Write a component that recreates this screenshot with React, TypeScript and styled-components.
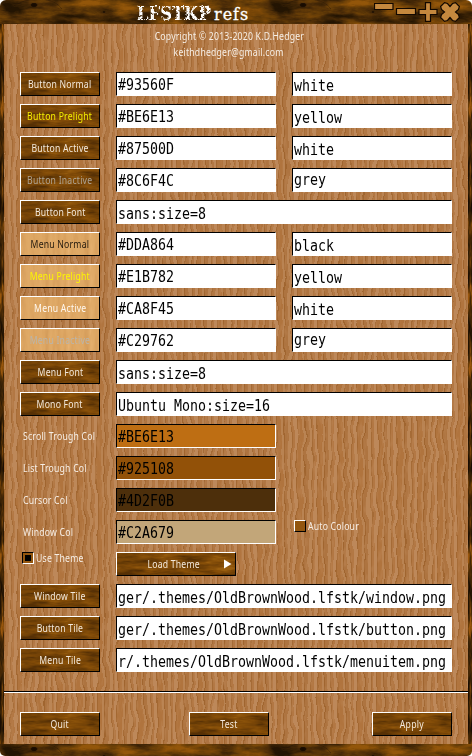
import React from 'react';
import styled, { createGlobalStyle, css } from 'styled-components';

type Texture = { w: number; h: number; freq: string; seed: number; r: string; g: string; b: string; octaves?: number; contrast?: number; extra?: string };

const svgUrl = (svg: string) => `url("data:image/svg+xml,${encodeURIComponent(svg)}")`;

/* Procedural wood: one noise channel is stretched, then mapped on a colour ramp. */
const wood = ({ w, h, freq, seed, r, g, b, octaves = 3, contrast = 2.4, extra = '' }: Texture) => {
  const k = contrast;
  const o = 0.5 - k / 2;
  const row = `${k} 0 0 0 ${o}`;
  return svgUrl(`<svg xmlns="http://www.w3.org/2000/svg" width="${w}" height="${h}"><filter id="f" x="0" y="0" width="100%" height="100%" color-interpolation-filters="sRGB"><feTurbulence type="fractalNoise" baseFrequency="${freq}" numOctaves="${octaves}" seed="${seed}" stitchTiles="stitch"/><feColorMatrix values="${row} ${row} ${row} 0 0 0 0 1"/><feComponentTransfer><feFuncR type="table" tableValues="${r}"/><feFuncG type="table" tableValues="${g}"/><feFuncB type="table" tableValues="${b}"/></feComponentTransfer></filter><rect width="${w}" height="${h}" filter="url(#f)"/>${extra}</svg>`);
};

/* Panel grain: hard-edged vertical strands, bent slightly by noise. */
const grain = () => {
  const stops = [
    [0, 1, '#a0652f'], [1, 3, '#ae7440'], [4, 3, '#bb8656'], [7, 1, '#a56b36'],
    [8, 2, '#b27743'], [10, 3, '#bd885a'], [13, 1, '#a36832'], [14, 4, '#b0743e'], [18, 2, '#b98352'],
  ] as const;
  const stripes = stops.map(([x, w, c]) => `<rect x="${x}" width="${w}" height="20" fill="${c}"/>`).join('');
  return svgUrl(`<svg xmlns="http://www.w3.org/2000/svg" width="464" height="720"><defs><pattern id="p" width="20" height="20" patternUnits="userSpaceOnUse">${stripes}</pattern><filter id="f" filterUnits="userSpaceOnUse" x="-20" y="-20" width="504" height="760" color-interpolation-filters="sRGB"><feTurbulence type="fractalNoise" baseFrequency=".06 .045" numOctaves="2" seed="7" result="n"/><feDisplacementMap in="SourceGraphic" in2="n" scale="8" xChannelSelector="R" yChannelSelector="A" result="d"/><feTurbulence type="fractalNoise" baseFrequency=".3 .08" numOctaves="2" seed="2"/><feColorMatrix values="0 0 0 0 .74 0 0 0 0 .53 0 0 0 0 .34 4 0 0 0 -1.9" result="s"/><feComponentTransfer in="s" result="t"><feFuncA type="linear" slope=".45"/></feComponentTransfer><feMerge><feMergeNode in="d"/><feMergeNode in="t"/></feMerge></filter></defs><rect x="-20" y="-20" width="504" height="760" fill="url(#p)" filter="url(#f)"/></svg>`);
};

const knot = (x: number, y: number, s: number) =>
  `<g fill="none" stroke="#1c0e02" transform="translate(${x} ${y}) scale(${s})"><ellipse rx="3" ry="1.600" fill="#180b00"/><path d="M-25 4Q-10-7 6-6T28 4" opacity=".35"/></g>`;

const panelWood = grain();
const frameWood = wood({
  w: 269, h: 24, freq: '0.025 0.1', seed: 33, octaves: 5, contrast: 2,
  r: '.14 .22 .31 .4 .48 .58', g: '.08 .13 .18 .24 .28 .34', b: '.01 .02 .03 .03 .03 .04',
  extra: knot(34, 5, 1) + knot(104, 12, 0.4),
});
const sideWood = wood({
  w: 4, h: 260, freq: '0.2 0.03', seed: 12, octaves: 4,
  r: '.1 .14 .22 .3 .42 .6', g: '.05 .08 .13 .17 .24 .34', b: '.01 .01 .02 .02 .03 .05',
});
const buttonWood = wood({
  w: 120, h: 24, freq: '0.03 0.16', seed: 14, octaves: 4, contrast: 2,
  r: '.34 .4 .45 .5 .54 .6', g: '.19 .23 .26 .29 .32 .37', b: '.02 .02 .03 .03 .04 .06',
});
const menuWood = wood({
  w: 80, h: 24, freq: '0.18 0.02', seed: 9, octaves: 3, contrast: 1.3,
  r: '.81 .85 .87 .88 .91', g: '.6 .63 .655 .67 .7', b: '.34 .37 .39 .41 .45',
});

const Global = createGlobalStyle`
  * { box-sizing: border-box; }
  html, body { margin: 0; background: #fff; }
  body { overflow: hidden; }
`;

const WindowFrame = styled.main`
  width: 472px;
  height: 756px;
  display: grid;
  grid-template: 24px 720px 12px / 4px 464px 4px;
  overflow: hidden;
  border-radius: 6px 6px 5px 5px;
  background: ${frameWood} 0 0;
  font: 10px/14px "Noto Sans", sans-serif;
  color: #f6eee5;
`;

const TitleBar = styled.header`
  grid-column: 1 / -1;
  display: flex;
  justify-content: flex-end;
  align-items: flex-start;
`;

const Title = styled.h1`
  width: 111px;
  height: 24px;
  margin: 0 126px 0 0;
  display: flex;
  font-weight: normal;
`;

const Controls = styled.nav`
  width: 98px;
  height: 24px;
  display: flex;
`;

const Side = styled.div`
  background: ${sideWood};
`;

const Body = styled.section`
  display: flex;
  flex-direction: column;
  background: ${panelWood};
`;

const Credits = styled.div`
  height: 48px;
  padding: 5px 0 0;
  display: flex;
  flex-direction: column;
  align-items: center;
  margin-left: -14px;
  gap: 2px;
`;

const Form = styled.div`
  height: 619px;
  padding: 0 16px;
  display: flex;
  flex-direction: column;
  gap: 8px;
`;

const Row = styled.div`
  height: 24px;
  display: grid;
  grid-template-columns: 80px 160px 160px;
  column-gap: 16px;
`;

const Condensed = styled.span`
  display: inline-block;
  white-space: pre;
  letter-spacing: 0.25px;
  transform: scaleX(0.865);
`;

const raised = css`
  border: 1px solid;
  border-color: #fff #000 #000 #fff;
`;

const Button = styled.button<{ $menu?: boolean; $color?: string; $wide?: boolean }>`
  ${raised}
  width: ${p => (p.$wide ? 120 : 80)}px;
  height: 24px;
  padding: 0 0 1px 0;
  display: flex;
  align-items: center;
  justify-content: center;
  background: ${p => (p.$menu ? menuWood : buttonWood)};
  color: ${p => p.$color || '#f3e9dc'};
  font: inherit;
  position: relative;
`;

const Arrow = styled.svg`
  position: absolute;
  right: 3px;
  top: 6px;
`;

const Field = styled.div<{ $bg?: string; $full?: boolean; $drop?: number }>`
  grid-column: ${p => (p.$full ? 'span 2' : 'auto')};
  height: 24px;
  overflow: hidden;
  padding: ${p => p.$drop ?? 2}px 0 0 1px;
  border: 1px solid;
  border-color: #000 #fff #fff #000;
  background: ${p => p.$bg || '#fff'};
  color: #000;
  font: 15px/20px "DejaVu Sans Mono", monospace;
`;

const Mono = styled.span`
  display: inline-block;
  white-space: pre;
  transform: scaleX(0.886);
  transform-origin: 0 0;
`;

const Caption = styled.label`
  padding: 5px 0 0 3px;
  white-space: nowrap;
  & > span { transform-origin: 0 50%; }
`;

const CheckLabel = styled.label`
  height: 12px;
  margin-left: 2px;
  display: flex;
  align-items: center;
  gap: 2px;
  white-space: nowrap;
  & > span { transform-origin: 0 50%; }
`;

const Box = styled.i<{ $on?: boolean }>`
  flex: none;
  width: 12px;
  height: 12px;
  border: 1px solid;
  border-color: ${p => (p.$on ? '#000 #fff #fff #000' : '#fff #000 #000 #fff')};
  background: #93560f;
  display: grid;
  place-items: center;
  &::after {
    content: '';
    width: 6px;
    height: 6px;
    background: ${p => (p.$on ? '#000' : 'transparent')};
  }
`;

const Divider = styled.hr`
  width: 100%;
  height: 2px;
  margin: 0;
  border: 0;
  border-top: 1px solid #000;
  background: #fff;
`;

const Actions = styled.footer`
  padding: 19px 16px 0;
  display: grid;
  grid-template-columns: 169px 183px 80px;
`;

const Text = ({ children }: { children: string }) => <Condensed>{children}</Condensed>;

const colours = [
  { label: 'Button Normal', value: '#93560F', text: 'white' },
  { label: 'Button Prelight', value: '#BE6E13', text: 'yellow', color: '#f4ee00' },
  { label: 'Button Active', value: '#87500D', text: 'white' },
  { label: 'Button Inactive', value: '#8C6F4C', text: 'grey', color: '#afa494' },
  { label: 'Button Font', value: 'sans:size=8' },
  { label: 'Menu Normal', value: '#DDA864', text: 'black', color: '#21180d', menu: true },
  { label: 'Menu Prelight', value: '#E1B782', text: 'yellow', color: '#fdf600', menu: true },
  { label: 'Menu Active', value: '#CA8F45', text: 'white', color: '#fff8ef', menu: true },
  { label: 'Menu Inactive', value: '#C29762', text: 'grey', color: '#bab5ab', menu: true },
  { label: 'Menu Font', value: 'sans:size=8' },
  { label: 'Mono Font', value: 'Ubuntu Mono:size=16' },
];

const troughs = [
  ['Scroll Trough Col', '#BE6E13'],
  ['List Trough Col', '#925108'],
  ['Cursor Col', '#4D2F0B'],
  ['Window Col', '#C2A679'],
];

const tiles = [
  ['Window Tile', 'ger/.themes/OldBrownWood.lfstk/window.png'],
  ['Button Tile', 'ger/.themes/OldBrownWood.lfstk/button.png'],
  ['Menu Tile', 'r/.themes/OldBrownWood.lfstk/menuitem.png'],
];

export default function App() {
  return (
    <>
      <Global />
      <WindowFrame>
        <TitleBar>
          <Title>
            <svg width="113" height="24" fill="#fff" fontFamily="DejaVu Serif" fontSize="20">
              <defs>
                <filter id="worn" x="-5%" y="-10%" width="110%" height="120%">
                  <feTurbulence type="fractalNoise" baseFrequency=".4" numOctaves="2" seed="4" result="n" />
                  <feDisplacementMap in="SourceGraphic" in2="n" scale="3" xChannelSelector="R" yChannelSelector="G" result="d" />
                  <feColorMatrix in="n" values="0 0 0 0 0 0 0 0 0 0 0 0 0 0 0 5 0 0 0 -1.2" result="m" />
                  <feComposite in="d" in2="m" operator="in" />
                </filter>
              </defs>
              <text x="0" y="20" fontSize="18.500" fontFamily="DejaVu Serif Condensed, DejaVu Serif" fontWeight="bold" textLength="74" lengthAdjust="spacingAndGlyphs" filter="url(#worn)">LFSTKP</text>
              <text x="77" y="20" fontSize="16" letterSpacing="1" stroke="#fff" strokeWidth=".3">refs</text>
            </svg>
          </Title>
          <Controls>
            <svg width="98" height="24" fill="#c4883e" stroke="#120800" strokeWidth="1.2">
              <path d="M.5 3.500h18.500v6h-18.500zM22.500 8.500h19v6h-19zM51.500 2.600h5v6.900h6.500v5h-6.500v6.900h-5v-6.900h-6.500v-5h6.500z" />
              <path d="M70.500 2.600l3 .9 2.500 3 2.500-3 3-.9 3.900 3.900-.9 3-3 2.500 3 2.500.9 3-3.900 3.900-3-.9-2.500-3-2.500 3-3 .9-3.900-3.900.9-3 3-2.500-3-2.500-.9-3z" />
            </svg>
          </Controls>
        </TitleBar>
        <Side />
        <Body>
          <Credits>
            <Text>Copyright © 2013-2020 K.D.Hedger</Text>
            <Text>keithdhedger@gmail.com</Text>
          </Credits>
          <Form>
            {colours.map(c => (
              <Row key={c.label}>
                <Button $menu={c.menu} $color={c.color}><Text>{c.label}</Text></Button>
                <Field $full={!c.text} $drop={c.text ? 2 : 3}><Mono>{c.value}</Mono></Field>
                {c.text && <Field $drop={c.text === 'grey' ? 1 : 3}><Mono>{c.text}</Mono></Field>}
              </Row>
            ))}
            {troughs.map(([label, value]) => (
              <Row key={label}>
                <Caption><Text>{label}</Text></Caption>
                <Field $bg={value}><Mono>{value}</Mono></Field>
                {label === 'Window Col' && <CheckLabel><Box /><Text>Auto Colour</Text></CheckLabel>}
              </Row>
            ))}
            <Row>
              <CheckLabel><Box $on /><Text>Use Theme</Text></CheckLabel>
              <Button $wide>
                <Text>Load Theme  </Text>
                <Arrow width="8" height="10"><path d="M0 .5L7.500 5 0 9.500z" fill="#fff" /></Arrow>
              </Button>
            </Row>
            {tiles.map(([label, value]) => (
              <Row key={label}>
                <Button><Text>{label}</Text></Button>
                <Field $full $drop={3}><Mono>{value}</Mono></Field>
              </Row>
            ))}
          </Form>
          <Divider />
          <Actions>
            <Button><Text>Quit</Text></Button>
            <Button><Text>Test</Text></Button>
            <Button><Text>Apply</Text></Button>
          </Actions>
        </Body>
        <Side />
      </WindowFrame>
    </>
  );
}
